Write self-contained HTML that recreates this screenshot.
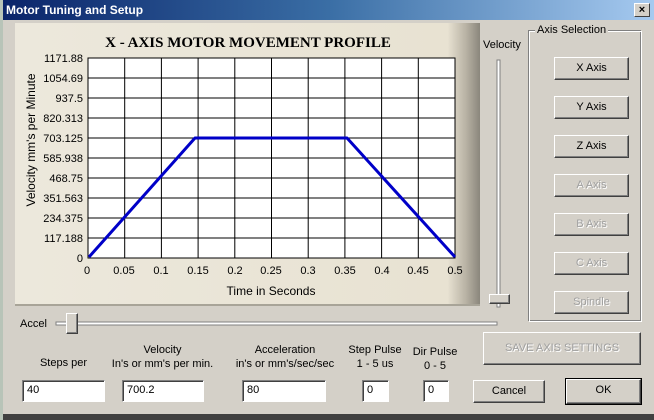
<!DOCTYPE html>
<html><head><meta charset="utf-8"><style>
*{margin:0;padding:0;box-sizing:border-box}
body{width:654px;height:420px;overflow:hidden;background:#d4d0c8;font-family:"Liberation Sans",sans-serif;font-size:11px;color:#000;position:relative}
.a{position:absolute}
.title{left:3px;top:0;width:651px;height:20px;background:linear-gradient(90deg,#0a246a,#3a6ea5 50%,#a6caf0);color:#fff;font-weight:bold;font-size:12px;line-height:20px;padding-left:3px}
.x{right:4px;top:3px;width:16px;height:14px;background:#d4d0c8;border:1px solid;border-color:#fff #404040 #404040 #fff;color:#000;font-size:11px;line-height:12px;text-align:center;font-weight:bold}
.btn{position:absolute;background:#d4d0c8;border:1px solid;border-color:#fff #404040 #404040 #fff;box-shadow:inset -1px -1px 0 #808080;text-align:center;font-size:11px}
.dis{color:#a0a0a0;text-shadow:1px 1px 0 #fff}
.inp{position:absolute;height:22px;background:#fff;border:1px solid;border-color:#808080 #fff #fff #808080;box-shadow:inset 1px 1px 0 #404040;padding:3px 0 0 4px;font-size:11px}
.lbl{position:absolute;text-align:center;font-size:11px;line-height:14px}
</style></head><body>
<div class="a" style="left:0;top:0;width:3px;height:420px;background:#b8c4b8"></div>
<div class="a title">Motor Tuning and Setup<div class="a x">×</div></div>
<div class="a" style="left:15px;top:23px;width:465px;height:283px;background:linear-gradient(90deg,#ece8dc 0%,#e8e2d2 93%,#b8b2a4 97%,#8a867c 100%);border-bottom:2px solid #a8a498"></div>
<svg class="a" style="left:0;top:0" width="654" height="420" xmlns="http://www.w3.org/2000/svg">
<text x="248" y="47" font-family="Liberation Serif" font-size="15" font-weight="bold" text-anchor="middle">X - AXIS MOTOR MOVEMENT PROFILE</text>
<rect x="88" y="58" width="367" height="200" fill="#fff" stroke="#000"/>
<g stroke="#000" stroke-width="1">
<path d="M124.7 58V258M161.4 58V258M198.1 58V258M234.8 58V258M271.5 58V258M308.2 58V258M344.9 58V258M381.6 58V258M418.3 58V258"/>
<path d="M88 78H455M88 98H455M88 118H455M88 138H455M88 158H455M88 178H455M88 198H455M88 218H455M88 238H455"/>
</g>
<polyline points="89,257 195,138 347,138 455,257" fill="none" stroke="#0000c8" stroke-width="3" stroke-linejoin="round"/>
<g font-size="11" text-anchor="end" font-family="Liberation Sans">
<text x="83" y="62">1171.88</text><text x="83" y="82">1054.69</text><text x="83" y="102">937.5</text><text x="83" y="122">820.313</text><text x="83" y="142">703.125</text><text x="83" y="162">585.938</text><text x="83" y="182">468.75</text><text x="83" y="202">351.563</text><text x="83" y="222">234.375</text><text x="83" y="242">117.188</text><text x="83" y="262">0</text>
</g>
<g font-size="11" text-anchor="middle" font-family="Liberation Sans">
<text x="87" y="274">0</text><text x="124" y="274">0.05</text><text x="161" y="274">0.1</text><text x="198" y="274">0.15</text><text x="235" y="274">0.2</text><text x="271" y="274">0.25</text><text x="308" y="274">0.3</text><text x="345" y="274">0.35</text><text x="382" y="274">0.4</text><text x="418" y="274">0.45</text><text x="455" y="274">0.5</text>
<text x="271" y="295" font-size="12">Time in Seconds</text>
<text transform="translate(35,140) rotate(-90)" font-size="12">Velocity mm's per Minute</text>
</g>
<rect x="497" y="60" width="3" height="247" fill="#fff" stroke="#808080"/>
<rect x="56" y="322" width="441" height="3" fill="#fff" stroke="#808080"/>
<rect x="528.5" y="30.5" width="112" height="290" fill="none" stroke="#808080"/>
<rect x="529.5" y="31.5" width="112" height="290" fill="none" stroke="#fff"/>
</svg>
<div class="lbl" style="left:483px;top:38px">Velocity</div>
<div class="btn" style="left:489px;top:294px;width:21px;height:10px"></div>
<div class="lbl" style="left:535px;top:23px;background:#d4d0c8;padding:0 2px">Axis Selection</div>
<div class="btn" style="left:554px;top:57px;width:75px;height:23px;line-height:21px">X Axis</div>
<div class="btn" style="left:554px;top:96px;width:75px;height:23px;line-height:21px">Y Axis</div>
<div class="btn" style="left:554px;top:135px;width:75px;height:23px;line-height:21px">Z Axis</div>
<div class="btn dis" style="left:554px;top:174px;width:75px;height:23px;line-height:21px">A Axis</div>
<div class="btn dis" style="left:554px;top:213px;width:75px;height:23px;line-height:21px">B Axis</div>
<div class="btn dis" style="left:554px;top:252px;width:75px;height:23px;line-height:21px">C Axis</div>
<div class="btn dis" style="left:554px;top:291px;width:75px;height:23px;line-height:21px">Spindle</div>
<div class="lbl" style="left:20px;top:317px">Accel</div>
<div class="btn" style="left:66px;top:313px;width:12px;height:21px"></div>
<div class="btn dis" style="left:483px;top:332px;width:158px;height:33px;line-height:31px">SAVE AXIS SETTINGS</div>
<div class="lbl" style="left:22px;top:356px;width:83px">Steps per</div>
<div class="lbl" style="left:95px;top:343px;width:135px">Velocity<br>In's or mm's per min.</div>
<div class="lbl" style="left:190px;top:343px;width:190px">Acceleration<br>in's or mm's/sec/sec</div>
<div class="lbl" style="left:340px;top:343px;width:70px">Step Pulse<br>1 - 5 us</div>
<div class="lbl" style="left:405px;top:345px;width:60px">Dir Pulse<br>0 - 5</div>
<div class="inp" style="left:22px;top:380px;width:83px">40</div>
<div class="inp" style="left:122px;top:380px;width:82px">700.2</div>
<div class="inp" style="left:242px;top:380px;width:84px">80</div>
<div class="inp" style="left:362px;top:380px;width:27px">0</div>
<div class="inp" style="left:423px;top:380px;width:26px">0</div>
<div class="btn" style="left:473px;top:380px;width:72px;height:23px;line-height:21px">Cancel</div>
<div class="btn" style="left:566px;top:379px;width:75px;height:25px;line-height:21px;outline:1px solid #000">OK</div>
<div class="a" style="left:3px;top:414px;width:651px;height:6px;background:#404040"></div>
</body></html>
